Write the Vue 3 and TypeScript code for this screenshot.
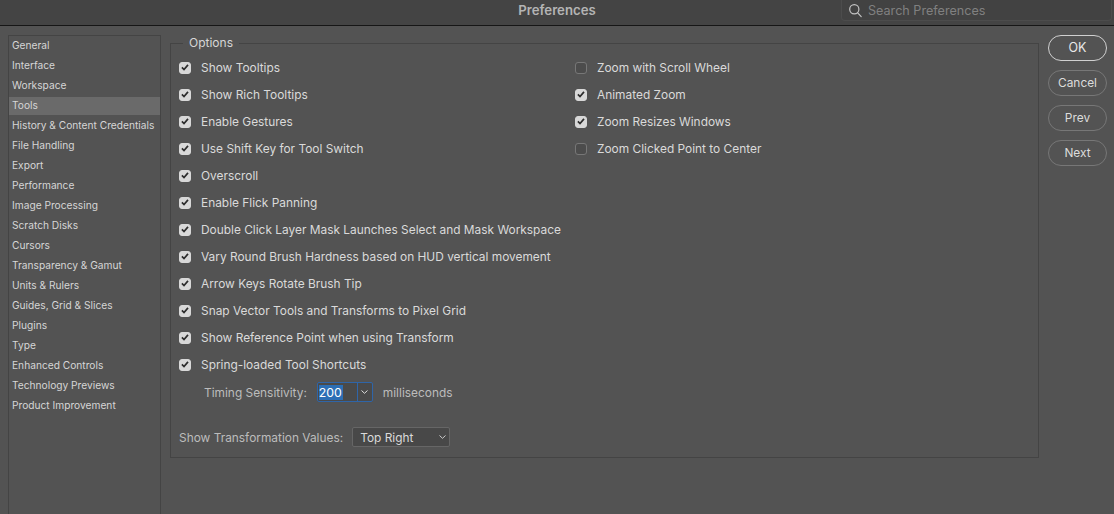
<script setup lang="ts">
const categories: string[] = ['General','Interface','Workspace','Tools','History & Content Credentials','File Handling','Export','Performance','Image Processing','Scratch Disks','Cursors','Transparency & Gamut','Units & Rulers','Guides, Grid & Slices','Plugins','Type','Enhanced Controls','Technology Previews','Product Improvement']
const leftOptions: string[] = ['Show Tooltips','Show Rich Tooltips','Enable Gestures','Use Shift Key for Tool Switch','Overscroll','Enable Flick Panning','Double Click Layer Mask Launches Select and Mask Workspace','Vary Round Brush Hardness based on HUD vertical movement','Arrow Keys Rotate Brush Tip','Snap Vector Tools and Transforms to Pixel Grid','Show Reference Point when using Transform','Spring-loaded Tool Shortcuts']
const rightOptions = [
  { label: 'Zoom with Scroll Wheel', on: false },
  { label: 'Animated Zoom', on: true },
  { label: 'Zoom Resizes Windows', on: true },
  { label: 'Zoom Clicked Point to Center', on: false },
]
const buttons: string[] = ['OK','Cancel','Prev','Next']
</script>

<template>
  <div class="window">
    <header class="titlebar">
      <div class="title">Preferences</div>
      <div class="search">
        <svg width="15" height="15" viewBox="0 0 15 15" fill="none" stroke="#c4c4c4" stroke-width="1.2" stroke-linecap="round"><circle cx="6.3" cy="6.3" r="4.6"/><path d="M9.7 9.9 13.2 13.6"/></svg>
        <span>Search Preferences</span>
      </div>
    </header>
    <main class="body">
      <nav class="sidebar">
        <div v-for="c in categories" :key="c" class="cat" :class="{ active: c === 'Tools' }">{{ c }}</div>
      </nav>
      <section class="group">
        <div class="legend">Options</div>
        <div class="columns">
          <div class="col left">
            <div v-for="o in leftOptions" :key="o" class="row">
              <span class="box on"><svg width="8" height="7" viewBox="0 0 8 7" fill="none" stroke="#2c2c2c" stroke-width="1.7"><path d="M.9 3.4 3 5.5 7 .9"/></svg></span>
              <span class="lbl">{{ o }}</span>
            </div>
            <div class="timing">
              <span class="dim">Timing Sensitivity:</span>
              <span class="combo"><span class="num"><span class="sel">200</span></span><span class="arrow"><svg width="7" height="4" viewBox="0 0 7 4" fill="none" stroke="#ddd" stroke-width="1"><path d="M.5.5 3.5 3.3 6.5.5"/></svg></span></span>
              <span class="dim">milliseconds</span>
            </div>
            <div class="transform">
              <span class="dim">Show Transformation Values:</span>
              <span class="select"><span>Top Right</span><svg width="7" height="4" viewBox="0 0 7 4" fill="none" stroke="#ccc" stroke-width="1"><path d="M.5.5 3.5 3.3 6.5.5"/></svg></span>
            </div>
          </div>
          <div class="col">
            <div v-for="o in rightOptions" :key="o.label" class="row">
              <span class="box" :class="{ on: o.on }"><svg v-if="o.on" width="8" height="7" viewBox="0 0 8 7" fill="none" stroke="#2c2c2c" stroke-width="1.7"><path d="M.9 3.4 3 5.5 7 .9"/></svg></span>
              <span class="lbl">{{ o.label }}</span>
            </div>
          </div>
        </div>
      </section>
      <aside class="actions">
        <button v-for="b in buttons" :key="b" class="btn" :class="{ primary: b === 'OK' }">{{ b }}</button>
      </aside>
    </main>
  </div>
</template>

<style>
html, body { margin: 0; background: #535353; overflow: hidden; }
</style>

<style scoped>
.window { width: 1114px; height: 514px; background: #535353; display: flex; flex-direction: column; font-family: Inter, "Liberation Sans", sans-serif; color: #dcdcdc; overflow: hidden; }
.titlebar { height: 25px; flex: none; box-sizing: content-box; background: #444444; border-bottom: 1px solid #161616; display: flex; align-items: flex-start; justify-content: flex-end; position: relative; }
.title { position: absolute; left: 0; right: 0; top: 3px; line-height: 15px; text-align: center; font-size: 13.2px; font-weight: 600; color: #b4b4b4; }
.search { width: 271px; height: 21px; margin-right: 2px; box-sizing: border-box; border: 1px solid #4c4c4c; border-top: none; border-radius: 0 0 4px 4px; display: flex; align-items: center; gap: 5px; padding-left: 6px; font-size: 12.6px; color: #808080; background: #424242; }
.body { flex: 1; display: flex; align-items: flex-start; padding: 9px 7px 0 8px; min-height: 0; }
.sidebar { width: 153px; height: 490px; flex: none; box-sizing: border-box; border: 1px solid #444; border-bottom: none; margin-right: 9px; }
.cat { height: 20px; line-height: 19px; padding-left: 3px; font-size: 10.2px; color: #d6d6d6; white-space: nowrap; }
.cat.active { background: #6a6a6a; height: 18px; line-height: 17px; margin: 1px 0; }
.group { width: 869px; height: 415px; margin-top: 8px; flex: none; box-sizing: border-box; border: 1px solid #444; position: relative; }
.legend { position: absolute; left: 12px; top: -9px; padding: 0 6px; background: #535353; font-size: 12px; line-height: 16px; color: #d6d6d6; }
.columns { display: flex; padding: 10px 0 0 8px; }
.col { display: flex; flex-direction: column; }
.col.left { width: 396px; }
.row { height: 27px; display: flex; align-items: center; gap: 10px; font-size: 11.9px; white-space: nowrap; }
.box { width: 12px; height: 12px; box-sizing: border-box; border: 1px solid #777; border-radius: 3px; background: #4c4c4c; display: flex; align-items: center; justify-content: center; flex: none; }
.box.on { background: #d8d8d8; border-color: #d8d8d8; }
.lbl { color: #dadada; }
.dim { color: #bcbcbc; font-size: 11.9px; white-space: nowrap; }
.timing { display: flex; align-items: center; height: 20px; margin-top: 4px; padding-left: 25px; }
.combo { margin-left: 10px; margin-right: 10px; width: 56px; height: 20px; box-sizing: border-box; border: 1px solid #2f65a8; border-radius: 2px; display: flex; background: #4a4a4a; flex: none; }
.num { flex: 1; display: flex; align-items: center; padding-left: 1px; border-right: 1px solid #2f65a8; }
.sel { background: #2d6fb5; color: #fff; font-size: 12.3px; line-height: 15px; padding-right: 1px; }
.arrow { width: 14px; display: flex; align-items: center; justify-content: center; }
.transform { display: flex; align-items: center; margin-top: 25px; height: 20px; gap: 9px; }
.select { width: 98px; height: 20px; box-sizing: border-box; border: 1px solid #666; border-radius: 2px; background: #484848; display: flex; align-items: center; justify-content: space-between; padding: 0 3px 0 7px; font-size: 11.9px; color: #dadada; flex: none; }
.actions { display: flex; flex-direction: column; gap: 9px; margin-left: 9px; }
.btn { width: 59px; height: 26px; box-sizing: border-box; border: 1px solid #777; border-radius: 13px; background: transparent; color: #dcdcdc; font: 11.9px Inter, "Liberation Sans", sans-serif; padding: 0 0 2px; }
.btn.primary { border-color: #d0d0d0; color: #e8e8e8; font-size: 12.5px; }
</style>
